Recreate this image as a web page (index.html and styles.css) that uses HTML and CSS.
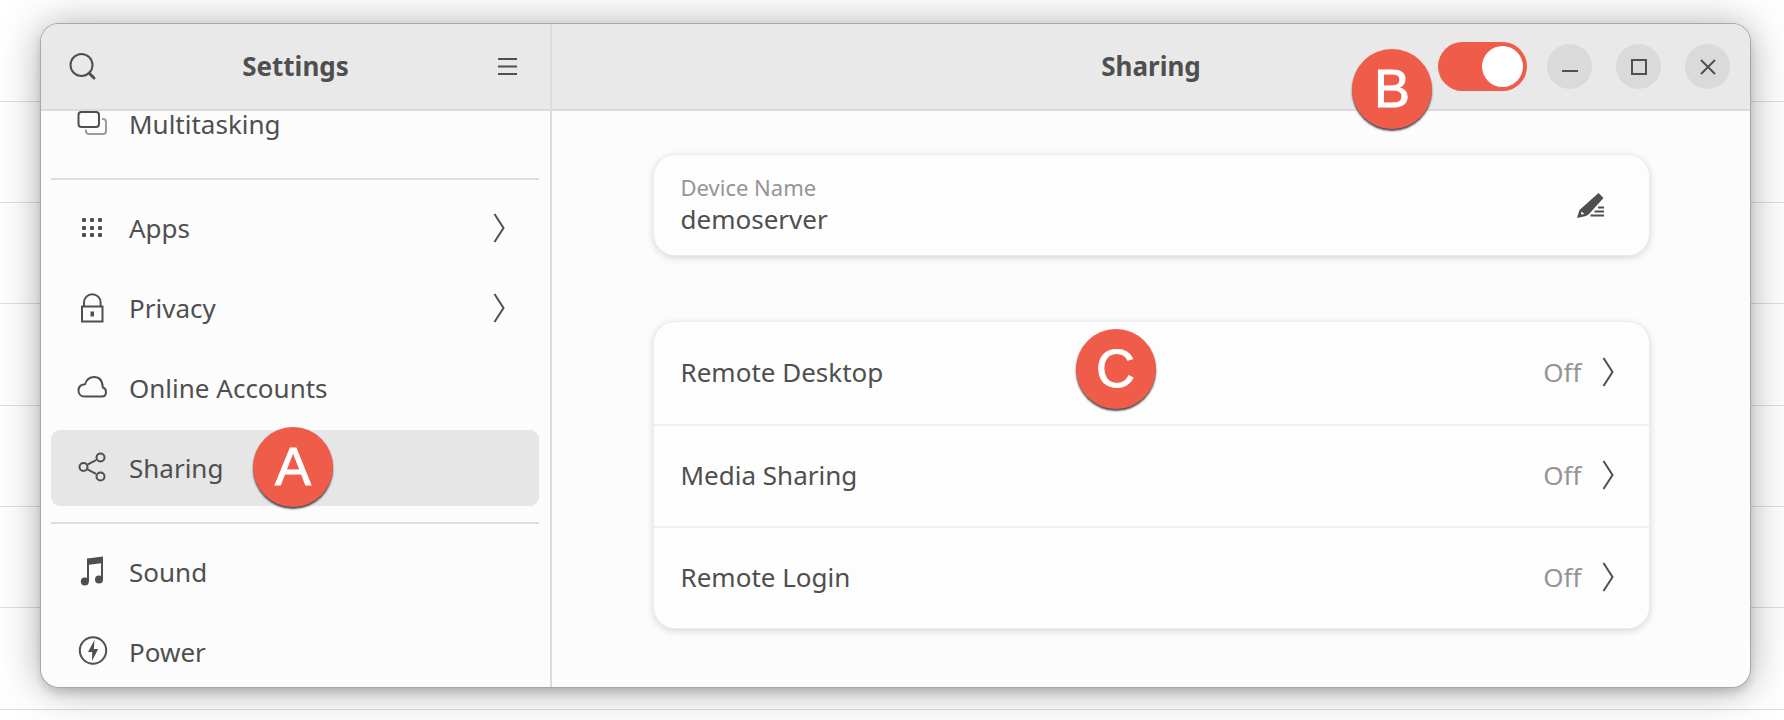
FILE: index.html
```html
<!DOCTYPE html>
<html lang="en">
<head>
<meta charset="utf-8">
<title>Settings - Sharing</title>
<link rel="stylesheet" href="styles.css">
</head>
<body>
<svg class="defs" aria-hidden="true">
  <symbol id="chevron" viewBox="0 0 12 30"><path d="M1.5 1 10.500 15 1.5 29" fill="none" stroke="currentColor" stroke-width="2"/></symbol>
</svg>
<div class="window">
  <aside class="sidebar">
    <header class="bar">
      <button class="tool" aria-label="Search"><svg width="28" height="28" viewBox="0 0 28 28" fill="none" stroke="currentColor"><circle cx="12.500" cy="12" r="11" stroke-width="2"/><path d="M20 20 25 25" stroke-width="3" stroke-linecap="round"/></svg></button>
      <h1 class="title">Settings</h1>
      <button class="tool tool-end" aria-label="Menu"><svg width="20" height="18" viewBox="0 0 20 18" fill="none" stroke="currentColor" stroke-width="2"><path d="M0 1h19M0 8.500h19M0 16h19"/></svg></button>
    </header>
    <nav class="nav">
      <div class="nav-list">
        <a class="item" href="#"><svg class="icon" viewBox="0 0 32 32" fill="none" stroke="currentColor" stroke-width="2"><rect x="2.500" y="4" width="20.500" height="15" rx="3"/><path d="M26 11h1a3 3 0 0 1 3 3V23a3 3 0 0 1-3 3H13a3 3 0 0 1-3-3v-1.500" opacity=".55"/></svg><span>Multitasking</span></a>
        <hr class="rule">
        <a class="item" href="#"><svg class="icon" viewBox="0 0 32 32" fill="currentColor"><rect x="6" y="6" width="4" height="4" rx="1"/><rect x="14" y="6" width="4" height="4" rx="1"/><rect x="22" y="6" width="4" height="4" rx="1"/><rect x="6" y="14" width="4" height="4" rx="1"/><rect x="14" y="14" width="4" height="4" rx="1"/><rect x="22" y="14" width="4" height="4" rx="1"/><rect x="6" y="21" width="4" height="4" rx="1"/><rect x="14" y="21" width="4" height="4" rx="1"/><rect x="22" y="21" width="4" height="4" rx="1"/></svg><span>Apps</span><svg class="chevron"><use href="#chevron"/></svg></a>
        <a class="item" href="#"><svg class="icon" viewBox="0 0 32 32" fill="none" stroke="currentColor" stroke-width="2"><rect x="6" y="14.500" width="20.500" height="15"/><path d="M8 14.500v-4a8.300 8.300 0 0 1 16.600 0v4"/><path d="M14.500 19.500h3.500v5h-3.500z" fill="currentColor" stroke="none"/></svg><span>Privacy</span><svg class="chevron"><use href="#chevron"/></svg></a>
        <a class="item" href="#"><svg class="icon" viewBox="0 0 32 32" fill="none" stroke="currentColor" stroke-width="2" stroke-linejoin="round"><path d="M8.500 24.500C4.500 24.500 2.500 21.500 2.500 18.500c0-3.500 2.500-6 6.500-6.300C10.500 7.500 14 5 18 5c5.500 0 8.500 4 8.800 10.500C29 16 30 18 30 20c0 2.500-1.500 4.500-4 4.500z"/></svg><span>Online Accounts</span></a>
        <a class="item selected" href="#" aria-current="page"><svg class="icon" viewBox="0 0 32 32" fill="none" stroke="currentColor" stroke-width="2"><circle cx="7.500" cy="15" r="4"/><circle cx="24.500" cy="5.500" r="4"/><circle cx="24.500" cy="24.500" r="4"/><path d="M11.500 12.700 20 8.200M11.500 17.300 20 21.800"/></svg><span>Sharing</span><span class="badge badge-a">A</span></a>
        <hr class="rule">
        <a class="item" href="#"><svg class="icon" viewBox="0 0 32 32" fill="currentColor"><path d="M11 2.500 27 .5V7L11 9z"/><path d="M11 4h2v22h-2zM25 3h2v20h-2z"/><circle cx="8.800" cy="25.500" r="4"/><circle cx="23" cy="23.500" r="4"/></svg><span>Sound</span></a>
        <a class="item" href="#"><svg class="icon" viewBox="0 0 32 32"><circle cx="17" cy="14.500" r="13.200" fill="none" stroke="currentColor" stroke-width="2"/><path d="M18.500 4 12 16h4.200L16 25l6.200-12h-4.400z" fill="currentColor"/></svg><span>Power</span></a>
      </div>
    </nav>
  </aside>
  <main class="panel">
    <header class="bar bar-main">
      <h2 class="title">Sharing</h2>
      <div class="controls">
        <input class="switch" type="checkbox" role="switch" aria-label="Enable sharing" checked>
        <span class="badge badge-b">B</span>
        <button class="control" aria-label="Minimize"><svg width="16" height="16" viewBox="0 0 16 16" stroke="currentColor" stroke-width="2"><path d="M0 12h16"/></svg></button>
        <button class="control" aria-label="Maximize"><svg width="16" height="16" viewBox="0 0 16 16" fill="none" stroke="currentColor" stroke-width="2"><rect x="1" y="1" width="14" height="14"/></svg></button>
        <button class="control" aria-label="Close"><svg width="16" height="16" viewBox="0 0 16 16" stroke="currentColor" stroke-width="2"><path d="M1 1 15 15M15 1 1 15"/></svg></button>
      </div>
    </header>
    <div class="content">
      <section class="card device">
        <div class="field">
          <label class="caption" for="device-name">Device Name</label>
          <input class="name" id="device-name" type="text" value="demoserver">
        </div>
        <button class="edit" aria-label="Edit device name"><svg width="28" height="26" viewBox="0 0 28 26" fill="currentColor"><path fill-rule="evenodd" d="M21.500 1 26.500 6 12 22 9 24 0 26 2.500 18zM4.500 19.500 4 22.500 7.500 22z"/><path d="M21 14.500h6v2h-6zM17.500 18.500h9.500v2H17.500zM13.500 22.500h13.500v2H13.500z"/></svg></button>
      </section>
      <section class="card">
        <a class="row" href="#"><span>Remote Desktop</span><span class="badge badge-c">C</span><span class="state">Off</span><svg class="chevron"><use href="#chevron"/></svg></a>
        <a class="row" href="#"><span>Media Sharing</span><span class="state">Off</span><svg class="chevron"><use href="#chevron"/></svg></a>
        <a class="row" href="#"><span>Remote Login</span><span class="state">Off</span><svg class="chevron"><use href="#chevron"/></svg></a>
      </section>
    </div>
  </main>
</div>
</body>
</html>
```
FILE: styles.css
```css
* { box-sizing: border-box; }

body {
  margin: 0;
  height: 100vh;
  padding: 24px 34px 33px 41px;
  font-family: "Noto Sans", "Open Sans", sans-serif;
  font-size: 26px;
  line-height: 36px;
  color: #4f4f4f;
  background: #fff linear-gradient(transparent 101px, #ddd 101px, #ddd 102px, transparent 102px, transparent 202px, #ddd 202px, #ddd 203px, transparent 203px, transparent 303px, #ddd 303px) 0 0 / 100% 304px;
  overflow: hidden;
}

.defs { position: absolute; width: 0; height: 0; }

a { color: inherit; text-decoration: none; }
svg { flex: none; display: block; }

button {
  border: 0;
  padding: 0;
  background: none;
  color: inherit;
  font: inherit;
}

.window {
  display: flex;
  height: 100%;
  border-radius: 18px;
  background: #fcfcfc;
  box-shadow: 0 0 0 1px #a8a8a8, 0 6px 8px rgba(0, 0, 0, .14), 0 2px 42px rgba(0, 0, 0, .34);
}

.sidebar {
  flex: none;
  display: flex;
  flex-direction: column;
  width: 511px;
  border-right: 2px solid #dcdcdc;
}

.bar {
  flex: none;
  display: grid;
  grid-template-columns: 1fr auto 1fr;
  align-items: center;
  height: 87px;
  padding: 0 28px;
  border-bottom: 2px solid #dadada;
  border-radius: 18px 0 0 0;
  background: #e9e9e9;
}

.bar-main {
  position: relative;
  padding: 0 20px;
  border-radius: 0 18px 0 0;
}

.title {
  margin: 0;
  padding-bottom: 2px;
  font-size: 26px;
  font-weight: 700;
}

.bar-main .title { grid-column: 2; }

.tool-end {
  justify-self: end;
  margin-right: 4px;
}

.nav {
  flex: 1;
  min-height: 0;
  padding: 0 11px 0 10px;
  overflow: hidden;
}

.nav-list {
  display: flex;
  flex-direction: column;
  gap: 4px;
  margin-top: -25px;
  line-height: 24px;
}

.item {
  position: relative;
  flex: none;
  display: flex;
  align-items: center;
  gap: 21px;
  height: 76px;
  padding: 0 34px 0 25px;
  border-radius: 9px;
}

.selected { background: #e6e6e6; }
.icon { width: 32px; height: 32px; }
.chevron { width: 12px; height: 30px; }
.item .chevron { margin-left: auto; }

.rule {
  flex: none;
  width: 100%;
  height: 2px;
  margin: 12px 0 6px;
  border: 0;
  background: #dedede;
}

.panel {
  flex: 1;
  min-width: 0;
}

.controls {
  justify-self: end;
  display: flex;
  align-items: center;
  gap: 24px;
}

.switch {
  appearance: none;
  width: 89px;
  height: 49px;
  margin: 0 -4px 0 0;
  padding: 4px;
  border-radius: 25px;
  background: #f05c4a;
}

.switch::before {
  content: "";
  display: block;
  width: 41px;
  height: 41px;
  border-radius: 50%;
  background: #fff;
}

.switch:checked::before { margin-left: auto; }

.control {
  display: grid;
  place-items: center;
  width: 45px;
  height: 45px;
  border-radius: 50%;
  background: #dadada;
}

.badge {
  position: absolute;
  width: 80px;
  height: 80px;
  border-radius: 50%;
  background: #f05c4a;
  box-shadow: 0 2px 2px rgba(0, 0, 0, .7);
  color: #fff;
  font-family: "Liberation Sans", sans-serif;
  font-size: 54px;
  line-height: 78px;
  text-align: center;
  -webkit-text-stroke: 1px #fff;
}

.badge-a { left: 202px; top: -3px; }
.badge-b { right: 318px; top: 25px; }
.badge-c { left: 422px; top: 7px; }

.content {
  display: flex;
  flex-direction: column;
  gap: 67px;
  max-width: 1035px;
  margin: 0 auto;
  padding: 44px 20px;
}

.card {
  border-radius: 21px;
  background: #fdfdfd;
  box-shadow: 0 0 0 1px #ececec, 0 2px 8px rgba(0, 0, 0, .18);
}

.device {
  display: flex;
  align-items: center;
  justify-content: space-between;
  height: 100px;
  padding: 0 44px 0 27px;
}

.field {
  display: flex;
  flex-direction: column;
  padding-bottom: 2px;
}

.caption {
  font-size: 22px;
  line-height: 30px;
  color: #959595;
}

.name {
  width: 100%;
  height: 34px;
  padding: 0;
  border: 0;
  background: none;
  color: inherit;
  font: inherit;
}

.row {
  position: relative;
  display: flex;
  align-items: center;
  height: 102px;
  padding: 0 35px 2px 27px;
}

.row + .row { border-top: 2px solid #efefef; }

.state {
  margin-left: auto;
  margin-right: 20px;
  color: #959595;
}
```
